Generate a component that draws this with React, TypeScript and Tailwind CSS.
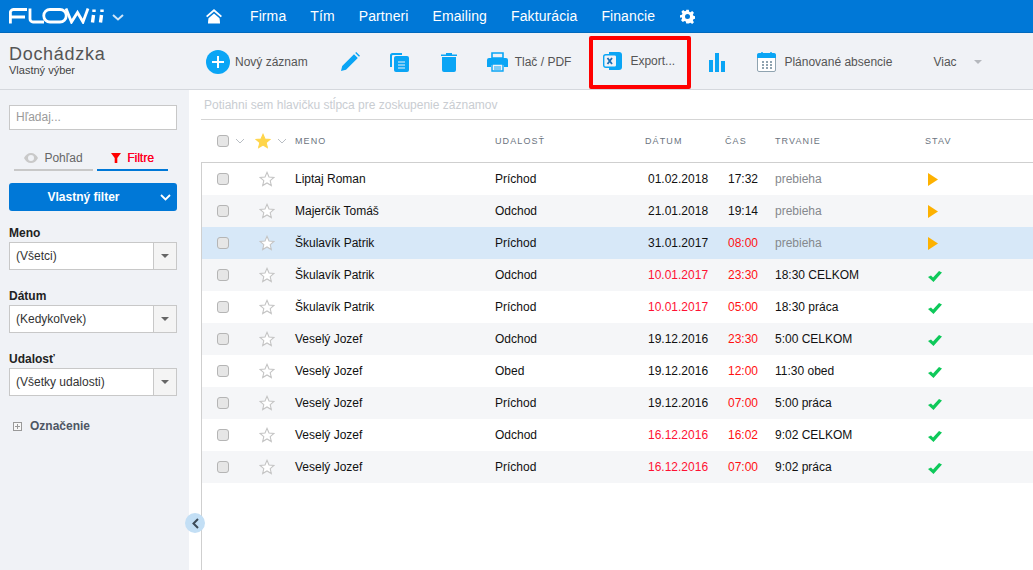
import React from "react";

const rows = [
  { n: "Liptaj Roman", e: "Príchod", d: "01.02.2018", t: "17:32", r: "prebieha", dr: false, tr: false, s: "p" },
  { n: "Majerčík Tomáš", e: "Odchod", d: "21.01.2018", t: "19:14", r: "prebieha", dr: false, tr: false, s: "p" },
  { n: "Škulavík Patrik", e: "Príchod", d: "31.01.2017", t: "08:00", r: "prebieha", dr: false, tr: true, s: "p" },
  { n: "Škulavík Patrik", e: "Odchod", d: "10.01.2017", t: "23:30", r: "18:30 CELKOM", dr: true, tr: true, s: "c" },
  { n: "Škulavík Patrik", e: "Príchod", d: "10.01.2017", t: "05:00", r: "18:30 práca", dr: true, tr: true, s: "c" },
  { n: "Veselý Jozef", e: "Odchod", d: "19.12.2016", t: "23:30", r: "5:00 CELKOM", dr: false, tr: true, s: "c" },
  { n: "Veselý Jozef", e: "Obed", d: "19.12.2016", t: "12:00", r: "11:30 obed", dr: false, tr: true, s: "c" },
  { n: "Veselý Jozef", e: "Príchod", d: "19.12.2016", t: "07:00", r: "5:00 práca", dr: false, tr: true, s: "c" },
  { n: "Veselý Jozef", e: "Odchod", d: "16.12.2016", t: "16:02", r: "9:02 CELKOM", dr: true, tr: true, s: "c" },
  { n: "Veselý Jozef", e: "Príchod", d: "16.12.2016", t: "07:00", r: "9:02 práca", dr: true, tr: true, s: "c" },
];

const Box = () => <span className="block w-[12px] h-[12px] rounded-[3px] border border-[#b5b5b5] bg-[#e6e6e6]" />;

const Star = ({ filled }: { filled?: boolean }) => (
  <svg width="16" height="16" viewBox="0 0 24 24" fill={filled ? "#ffd54a" : "#ffffff"} stroke={filled ? "#ffd54a" : "#c4c4c4"} strokeWidth="1.6">
    <path d="M12 2l3 6.9 7.4.7-5.6 4.9 1.700 7.300L12 17.900 5.500 21.800l1.700-7.300L1.600 9.600 9 8.900z" />
  </svg>
);

const Chev = () => (
  <svg width="10" height="6" viewBox="0 0 10 6" fill="none" stroke="#b9bec4" strokeWidth="1">
    <path d="M1 1l4 4 4-4" />
  </svg>
);

const Select = ({ label, value, mt }: { label: string; value: string; mt: string }) => (
  <div className={mt}>
    <div className="text-[12px] leading-[14px] font-bold text-[#222]">{label}</div>
    <div className="mt-[2px] h-[28px] w-[168px] flex border border-[#c8c8c8] bg-white">
      <div className="flex-1 pl-[6px] text-[12px] leading-[26px] text-[#333]">{value}</div>
      <div className="w-[23px] border-l border-[#c8c8c8] bg-[#f4f4f4] flex items-center justify-center">
        <span className="w-0 h-0 border-l-[4px] border-r-[4px] border-t-[4px] border-l-transparent border-r-transparent border-t-[#666]" />
      </div>
    </div>
  </div>
);

const Hd = ({ w, children }: { w: string; children?: React.ReactNode }) => (
  <div className={`${w} shrink-0 pt-[1px] text-[9px] tracking-[1.1px] text-[#6b7480]`}>{children}</div>
);

export default function App() {
  return (
    <div className="w-[1033px] h-[570px] overflow-hidden bg-white flex flex-col text-[12px]" style={{ fontFamily: '"Liberation Sans", Arial, sans-serif' }}>
      <header className="h-[33px] shrink-0 bg-[#0078d7] border-b border-[#0069bd] flex items-center text-white">
        <svg className="ml-[9px]" width="95" height="16" viewBox="0 0 95 16" fill="none" stroke="#fff" strokeWidth="2.8">
          <path d="M1.400 15.500V5a3 3 0 0 1 3-3.500H18M1.400 9H16" />
          <path d="M21 0.500v10.500a3 3 0 0 0 3 3h11" />
          <path d="M41 1.500h10a5.500 5.500 0 0 1 0 12.500H41a5.500 5.500 0 0 1 0-12.500z" />
          <path d="M57 .5l5.500 13.500L68.500 4.500l5.500 9.500L79 .5" />
          <path d="M84.500 7l-1 7.500M92.500 7l-1 7.500" strokeWidth="3.400" />
          <path d="M85 1.500v2.500M93 1.500v2.500" strokeWidth="3.400" />
        </svg>
        <svg className="ml-[8px] mt-[2px]" width="12" height="7" viewBox="0 0 12 7" fill="none" stroke="#cfe5f8" strokeWidth="2">
          <path d="M1 1l5 4.500L11 1" />
        </svg>
        <svg className="ml-[82px]" width="16" height="15" viewBox="0 0 16 15" fill="#fff">
          <path d="M8 0L0 7l1.300 1.200L8 2.500l6.700 5.700L16 7z" />
          <path d="M8 4.500L2.500 9.300c-.4 1.800-.5 3.600-.5 5.200h12c0-1.600-.1-3.400-.5-5.200z" />
        </svg>
        <nav className="flex ml-[28px] text-[14px] gap-[24px] tracking-[0.1px]">
          <span>Firma</span>
          <span>Tím</span>
          <span>Partneri</span>
          <span>Emailing</span>
          <span>Fakturácia</span>
          <span>Financie</span>
        </nav>
        <svg className="ml-[25px]" width="15" height="15" viewBox="0 0 24 24" fill="#fff">
          <path fillRule="evenodd" d="M10 1h4l.7 3.200 2 .8L19.500 3.300l2.800 2.800-1.700 2.800.8 2 3.100.7v4l-3.100.7-.8 2 1.700 2.800-2.800 2.800-2.800-1.700-2 .8L14 23h-4l-.7-3.200-2-.8-2.800 1.700-2.800-2.800 1.700-2.800-.8-2L0 14v-4l3.100-.7.8-2L2.200 4.500 5 1.700l2.800 1.700 2-.8zM12 8a4 4 0 1 0 0 8 4 4 0 0 0 0-8z" />
        </svg>
      </header>

      <div className="h-[57px] shrink-0 pt-[1px] bg-[#f0f2f6] border-b border-[#d5d8dd] flex items-center text-[12px] text-[#555]">
        <div className="w-[206px] shrink-0 pl-[9px] -mt-[3px]">
          <div className="text-[18px] leading-[20px] tracking-[0.7px] text-[#555]">Dochádzka</div>
          <div className="text-[11px] leading-[13px] text-[#444]">Vlastný výber</div>
        </div>
        <svg width="24" height="24" viewBox="0 0 24 24">
          <circle cx="12" cy="12" r="12" fill="#0aa5f5" />
          <path d="M12 6v12M6 12h12" stroke="#fff" strokeWidth="2" />
        </svg>
        <span className="ml-[5px]">Nový záznam</span>
        <svg className="ml-[33px]" width="19" height="19" viewBox="0 0 19 19" fill="#0aa5f5">
          <path d="M0 19l1.200-5L13 2.200l3.800 3.800L5 17.800zM14.200 1l1-1 3.800 3.800-1 1z" />
        </svg>
        <svg className="ml-[29px]" width="20" height="20" viewBox="0 0 20 20">
          <path d="M1 3.500A2.500 2.500 0 0 1 3.500 1H13v2H4a1 1 0 0 0-1 1v11H1z" fill="#0aa5f5" />
          <rect x="5" y="4" width="15" height="16" rx="2" fill="#0aa5f5" />
          <path d="M9 10h7M9 13h7M9 16h7" stroke="#f0f2f6" strokeWidth="1.200" />
        </svg>
        <svg className="ml-[32px]" width="16" height="20" viewBox="0 0 16 20" fill="#0aa5f5">
          <path d="M0 2.500h5V1h6v1.500h5V4H0zM1 5h14v13a2 2 0 0 1-2 2H3a2 2 0 0 1-2-2z" />
        </svg>
        <svg className="ml-[30px]" width="21" height="20" viewBox="0 0 21 20">
          <path d="M5 1h11v5H5z" fill="none" stroke="#0aa5f5" strokeWidth="1.600" />
          <path d="M2 6h17a2 2 0 0 1 2 2v7h-4v-2H4v2H0V8a2 2 0 0 1 2-2z" fill="#0aa5f5" />
          <path d="M5 12h11v7H5z" fill="#f0f2f6" stroke="#0aa5f5" strokeWidth="1.400" />
          <path d="M7 15h7M7 17h7" stroke="#0aa5f5" />
        </svg>
        <span className="ml-[7px]">Tlač / PDF</span>

        <div className="ml-[18px] self-end h-[53px] w-[102px] pb-[3px] flex items-center border-[4px] border-[#ff0000] rounded-[2px] box-border">
          <svg className="ml-[10px]" width="19" height="20" viewBox="0 0 19 20">
            <path d="M6 1h10a3 3 0 0 1 3 3v12a3 3 0 0 1-3 3H6z" fill="#0aa5f5" />
            <rect x="0.700" y="3.700" width="13" height="12.600" rx="2" fill="#f0f2f6" stroke="#0aa5f5" strokeWidth="1.400" />
            <path d="M4.500 7l4.500 6M9 7l-4.500 6" stroke="#1a6fb5" strokeWidth="1.800" />
          </svg>
          <span className="ml-[8px]">Export...</span>
        </div>

        <svg className="ml-[17px]" width="18" height="20" viewBox="0 0 18 20" fill="#0aa5f5">
          <rect x="1" y="8" width="4" height="12" />
          <rect x="7" y="1" width="4" height="19" />
          <rect x="13" y="9" width="4" height="11" />
        </svg>
        <svg className="ml-[31px]" width="19" height="20" viewBox="0 0 19 20">
          <rect x="0.500" y="2" width="18" height="17.500" rx="1.500" fill="#fff" stroke="#8fa3b0" />
          <path d="M0 6V3a2 2 0 0 1 2-2h15a2 2 0 0 1 2 2v3z" fill="#0aa5f5" />
          <path d="M5 0v3M14 0v3" stroke="#0aa5f5" strokeWidth="1.500" />
          <path d="M5 9h2v2H5zM9 9h2v2H9zM13 9h2v2h-2zM5 12h2v2H5zM9 12h2v2H9zM13 12h2v2h-2zM5 15h2v2H5zM9 15h2v2H9zM13 15h2v2h-2z" fill="#8fa3b0" />
        </svg>
        <span className="ml-[8px]">Plánované absencie</span>
        <span className="ml-[41px]">Viac</span>
        <span className="ml-[17px] w-0 h-0 border-l-[4px] border-r-[4px] border-t-[4px] border-l-transparent border-r-transparent border-t-[#b5b8bd]" />
      </div>

      <div className="flex-1 flex min-h-0 relative">
        <aside className="w-[189px] shrink-0 bg-[#f0f2f6] pl-[9px] pt-[15px]">
          <div className="w-[168px] h-[25px] border border-[#c8c8c8] bg-white pl-[6px] text-[12px] leading-[23px] text-[#9a9a9a]">Hľadaj...</div>
          <div className="flex mt-[17px] ml-[5px] text-[12px]">
            <div className="w-[79px] h-[24px] border-b-2 border-[#c8c8c8] flex items-center justify-center gap-[6px] text-[#666]">
              <svg width="14" height="10" viewBox="0 0 14 10" fill="#c9c9c9">
                <path fillRule="evenodd" d="M7 0c3 0 5.600 2 7 5-1.400 3-4 5-7 5S1.400 8 0 5c1.400-3 4-5 7-5zm0 2a3 3 0 1 0 0 6 3 3 0 0 0 0-6z" />
              </svg>
              <span>Pohľad</span>
            </div>
            <div className="ml-[4px] w-[71px] h-[24px] border-b-2 border-[#0078d7] flex items-center justify-center gap-[6px] text-[#ff0022]">
              <svg width="10" height="10" viewBox="0 0 10 10" fill="#ff0000">
                <path d="M0 0h10L6.300 5v5H3.700V5z" />
              </svg>
              <span className="[text-shadow:0.3px_0_0_#ff0022]">Filtre</span>
            </div>
          </div>
          <div className="mt-[12px] w-[168px] h-[28px] bg-[#0078d7] rounded-[3px] flex items-center text-white font-bold text-[12px]">
            <span className="flex-1 text-center pr-[2px]">Vlastný filter</span>
            <svg className="mr-[6px]" width="11" height="7" viewBox="0 0 11 7" fill="none" stroke="#fff" strokeWidth="1.800">
              <path d="M1 1l4.500 4.500L10 1" />
            </svg>
          </div>
          <Select label="Meno" value="(Všetci)" mt="mt-[15px]" />
          <Select label="Dátum" value="(Kedykoľvek)" mt="mt-[19px]" />
          <Select label="Udalosť" value="(Všetky udalosti)" mt="mt-[19px]" />
          <div className="mt-[21px] ml-[4px] flex items-center font-bold text-[12px] text-[#4e5663]">
            <svg width="9" height="9" viewBox="0 0 9 9" fill="none" stroke="#999">
              <rect x="0.500" y="0.500" width="8" height="8" fill="#f7f7f7" />
              <path d="M2 4.500h5M4.500 2v5" />
            </svg>
            <span className="ml-[8px]">Označenie</span>
          </div>
        </aside>

        <span className="absolute left-[185px] top-[423px] w-[20px] h-[20px] rounded-full bg-[#c3dff5] flex items-center justify-center">
          <svg width="7" height="11" viewBox="0 0 7 11" fill="none" stroke="#3c4a57" strokeWidth="2">
            <path d="M6 1L1.500 5.500 6 10" />
          </svg>
        </span>

        <main className="flex-1 min-w-0 pl-[12px]">
          <div className="h-[30px] border-b border-[#d5d5d5] pl-[3px] text-[12px] leading-[30px] text-[#c9cdd2]">Potiahni sem hlavičku stĺpca pre zoskupenie záznamov</div>
          <div className="h-[42px] flex items-center pl-[16px]">
            <Box />
            <span className="ml-[6px] mr-[10px]"><Chev /></span>
            <Star filled />
            <span className="ml-[6px] mr-[8px]"><Chev /></span>
            <Hd w="w-[200px]">MENO</Hd>
            <Hd w="w-[150px]">UDALOSŤ</Hd>
            <Hd w="w-[80px]">DÁTUM</Hd>
            <Hd w="w-[50px]">ČAS</Hd>
            <Hd w="w-[150px]">TRVANIE</Hd>
            <Hd w="w-[60px]">STAV</Hd>
          </div>
          <div className="h-[408px] border-l border-t border-[#cfcfcf] text-[12px] text-[#111]">
            {rows.map((r, i) => (
              <div key={i} className={`h-[32px] flex items-center ${i === 2 ? "bg-[#d7e8f8]" : i % 2 === 1 ? "bg-[#f5f6f8]" : "bg-white"}`}>
                <div className="w-[57px] shrink-0 pl-[15px]"><Box /></div>
                <div className="w-[36px] shrink-0"><Star /></div>
                <div className="w-[200px] shrink-0">{r.n}</div>
                <div className="w-[153px] shrink-0">{r.e}</div>
                <div className={`w-[80px] shrink-0 ${r.dr ? "text-[#ff1133]" : ""}`}>{r.d}</div>
                <div className={`w-[47px] shrink-0 ${r.tr ? "text-[#ff1111]" : ""}`}>{r.t}</div>
                <div className={`w-[150px] shrink-0 ${r.s === "p" ? "text-[#85888d]" : ""}`}>{r.r}</div>
                <div className="pl-[3px]">
                  {r.s === "p" ? (
                    <svg width="10" height="13" viewBox="0 0 10 13" fill="#fdb100"><path d="M0 0l10 6.500L0 13z" /></svg>
                  ) : (
                    <svg className="mt-[2px]" width="14" height="11" viewBox="0 0 14 11" fill="#0ec95a"><path d="M0 6L3 4.500 5 6.500 11 0 14 1.500 5.500 11z" /></svg>
                  )}
                </div>
              </div>
            ))}
          </div>
        </main>
      </div>
    </div>
  );
}
